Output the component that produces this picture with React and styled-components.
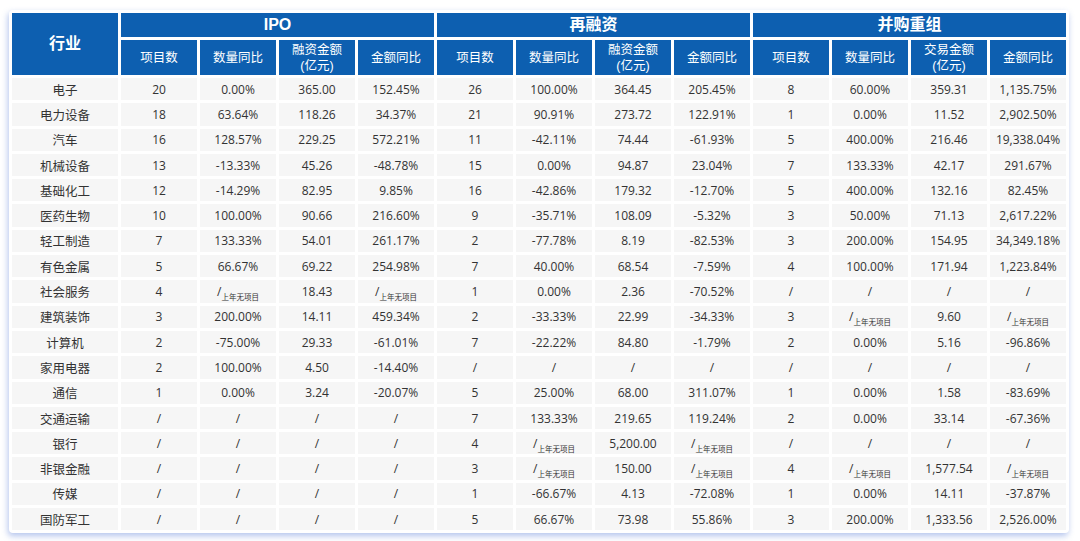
import React from 'react';
import styled, { createGlobalStyle } from 'styled-components';

const GlobalStyle = createGlobalStyle`
  html, body {
    margin: 0;
    padding: 0;
    background: #ffffff;
    font-family: 'Open Sans', 'Noto Sans CJK SC', sans-serif;
  }
`;

const Page = styled.div`
  width: 1080px;
  height: 541px;
  padding: 10px 11px 0 9px;
  box-sizing: border-box;
  background: #ffffff;
`;

const Card = styled.div`
  background: #ffffff;
  border-radius: 4px;
  box-shadow: -1px 3px 6px rgba(70, 110, 210, 0.4);
`;

const Table = styled.table`
  width: 100%;
  border-collapse: separate;
  border-spacing: 3px;
  table-layout: fixed;
`;

const HeadCell = styled.th`
  background: #0d5fb0;
  color: #ffffff;
  font-weight: ${(p) => (p.$big ? 700 : 400)};
  font-size: ${(p) => (p.$big ? '16px' : '12.5px')};
  line-height: ${(p) => (p.$big ? '20px' : '16px')};
  height: ${(p) => (p.$tall ? '35px' : '24px')};
  padding: 0;
  text-align: center;
  vertical-align: middle;
  font-family: 'Liberation Sans', 'Noto Sans CJK SC', sans-serif;
`;

const Cell = styled.td`
  background: #f6f6f6;
  color: #333333;
  font-size: ${(p) => (p.$name ? '12.5px' : '12px')};
  font-family: ${(p) => (p.$name ? "'Noto Sans CJK SC', sans-serif" : 'inherit')};
  height: 22.3px;
  padding: 0;
  text-align: center;
  vertical-align: middle;
  white-space: nowrap;
`;

const Slash = styled.span`
  font-size: 12px;
`;

const Note = styled.span`
  font-size: 7.5px;
  position: relative;
  top: 4px;
  font-family: 'Noto Sans CJK SC', sans-serif;
`;

const N = 'N';
const rows = [
  ['电子', '20', '0.00%', '365.00', '152.45%', '26', '100.00%', '364.45', '205.45%', '8', '60.00%', '359.31', '1,135.75%'],
  ['电力设备', '18', '63.64%', '118.26', '34.37%', '21', '90.91%', '273.72', '122.91%', '1', '0.00%', '11.52', '2,902.50%'],
  ['汽车', '16', '128.57%', '229.25', '572.21%', '11', '-42.11%', '74.44', '-61.93%', '5', '400.00%', '216.46', '19,338.04%'],
  ['机械设备', '13', '-13.33%', '45.26', '-48.78%', '15', '0.00%', '94.87', '23.04%', '7', '133.33%', '42.17', '291.67%'],
  ['基础化工', '12', '-14.29%', '82.95', '9.85%', '16', '-42.86%', '179.32', '-12.70%', '5', '400.00%', '132.16', '82.45%'],
  ['医药生物', '10', '100.00%', '90.66', '216.60%', '9', '-35.71%', '108.09', '-5.32%', '3', '50.00%', '71.13', '2,617.22%'],
  ['轻工制造', '7', '133.33%', '54.01', '261.17%', '2', '-77.78%', '8.19', '-82.53%', '3', '200.00%', '154.95', '34,349.18%'],
  ['有色金属', '5', '66.67%', '69.22', '254.98%', '7', '40.00%', '68.54', '-7.59%', '4', '100.00%', '171.94', '1,223.84%'],
  ['社会服务', '4', N, '18.43', N, '1', '0.00%', '2.36', '-70.52%', '/', '/', '/', '/'],
  ['建筑装饰', '3', '200.00%', '14.11', '459.34%', '2', '-33.33%', '22.99', '-34.33%', '3', N, '9.60', N],
  ['计算机', '2', '-75.00%', '29.33', '-61.01%', '7', '-22.22%', '84.80', '-1.79%', '2', '0.00%', '5.16', '-96.86%'],
  ['家用电器', '2', '100.00%', '4.50', '-14.40%', '/', '/', '/', '/', '/', '/', '/', '/'],
  ['通信', '1', '0.00%', '3.24', '-20.07%', '5', '25.00%', '68.00', '311.07%', '1', '0.00%', '1.58', '-83.69%'],
  ['交通运输', '/', '/', '/', '/', '7', '133.33%', '219.65', '119.24%', '2', '0.00%', '33.14', '-67.36%'],
  ['银行', '/', '/', '/', '/', '4', N, '5,200.00', N, '/', '/', '/', '/'],
  ['非银金融', '/', '/', '/', '/', '3', N, '150.00', N, '4', N, '1,577.54', N],
  ['传媒', '/', '/', '/', '/', '1', '-66.67%', '4.13', '-72.08%', '1', '0.00%', '14.11', '-37.87%'],
  ['国防军工', '/', '/', '/', '/', '5', '66.67%', '73.98', '55.86%', '3', '200.00%', '1,333.56', '2,526.00%'],
];

const groups = [
  { title: 'IPO', amount: '融资金额' },
  { title: '再融资', amount: '融资金额' },
  { title: '并购重组', amount: '交易金额' },
];

const Value = ({ v }) =>
  v === N ? (
    <>
      <Slash>/</Slash>
      <Note>上年无项目</Note>
    </>
  ) : (
    v
  );

export default function App() {
  return (
    <Page>
      <GlobalStyle />
      <Card>
        <Table>
          <colgroup>
            <col style={{ width: '106px' }} />
            {Array.from({ length: 12 }).map((_, i) => (
              <col key={i} />
            ))}
          </colgroup>
          <thead>
            <tr>
              <HeadCell $big rowSpan={2}>行业</HeadCell>
              {groups.map((g) => (
                <HeadCell $big key={g.title} colSpan={4}>
                  {g.title}
                </HeadCell>
              ))}
            </tr>
            <tr>
              {groups.map((g) => (
                <React.Fragment key={g.title}>
                  <HeadCell $tall>项目数</HeadCell>
                  <HeadCell $tall>数量同比</HeadCell>
                  <HeadCell $tall>
                    {g.amount}
                    <br />
                    (亿元)
                  </HeadCell>
                  <HeadCell $tall>金额同比</HeadCell>
                </React.Fragment>
              ))}
            </tr>
          </thead>
          <tbody>
            {rows.map((r) => (
              <tr key={r[0]}>
                {r.map((v, i) => (
                  <Cell key={i} $name={i === 0}>
                    <Value v={v} />
                  </Cell>
                ))}
              </tr>
            ))}
          </tbody>
        </Table>
      </Card>
    </Page>
  );
}
